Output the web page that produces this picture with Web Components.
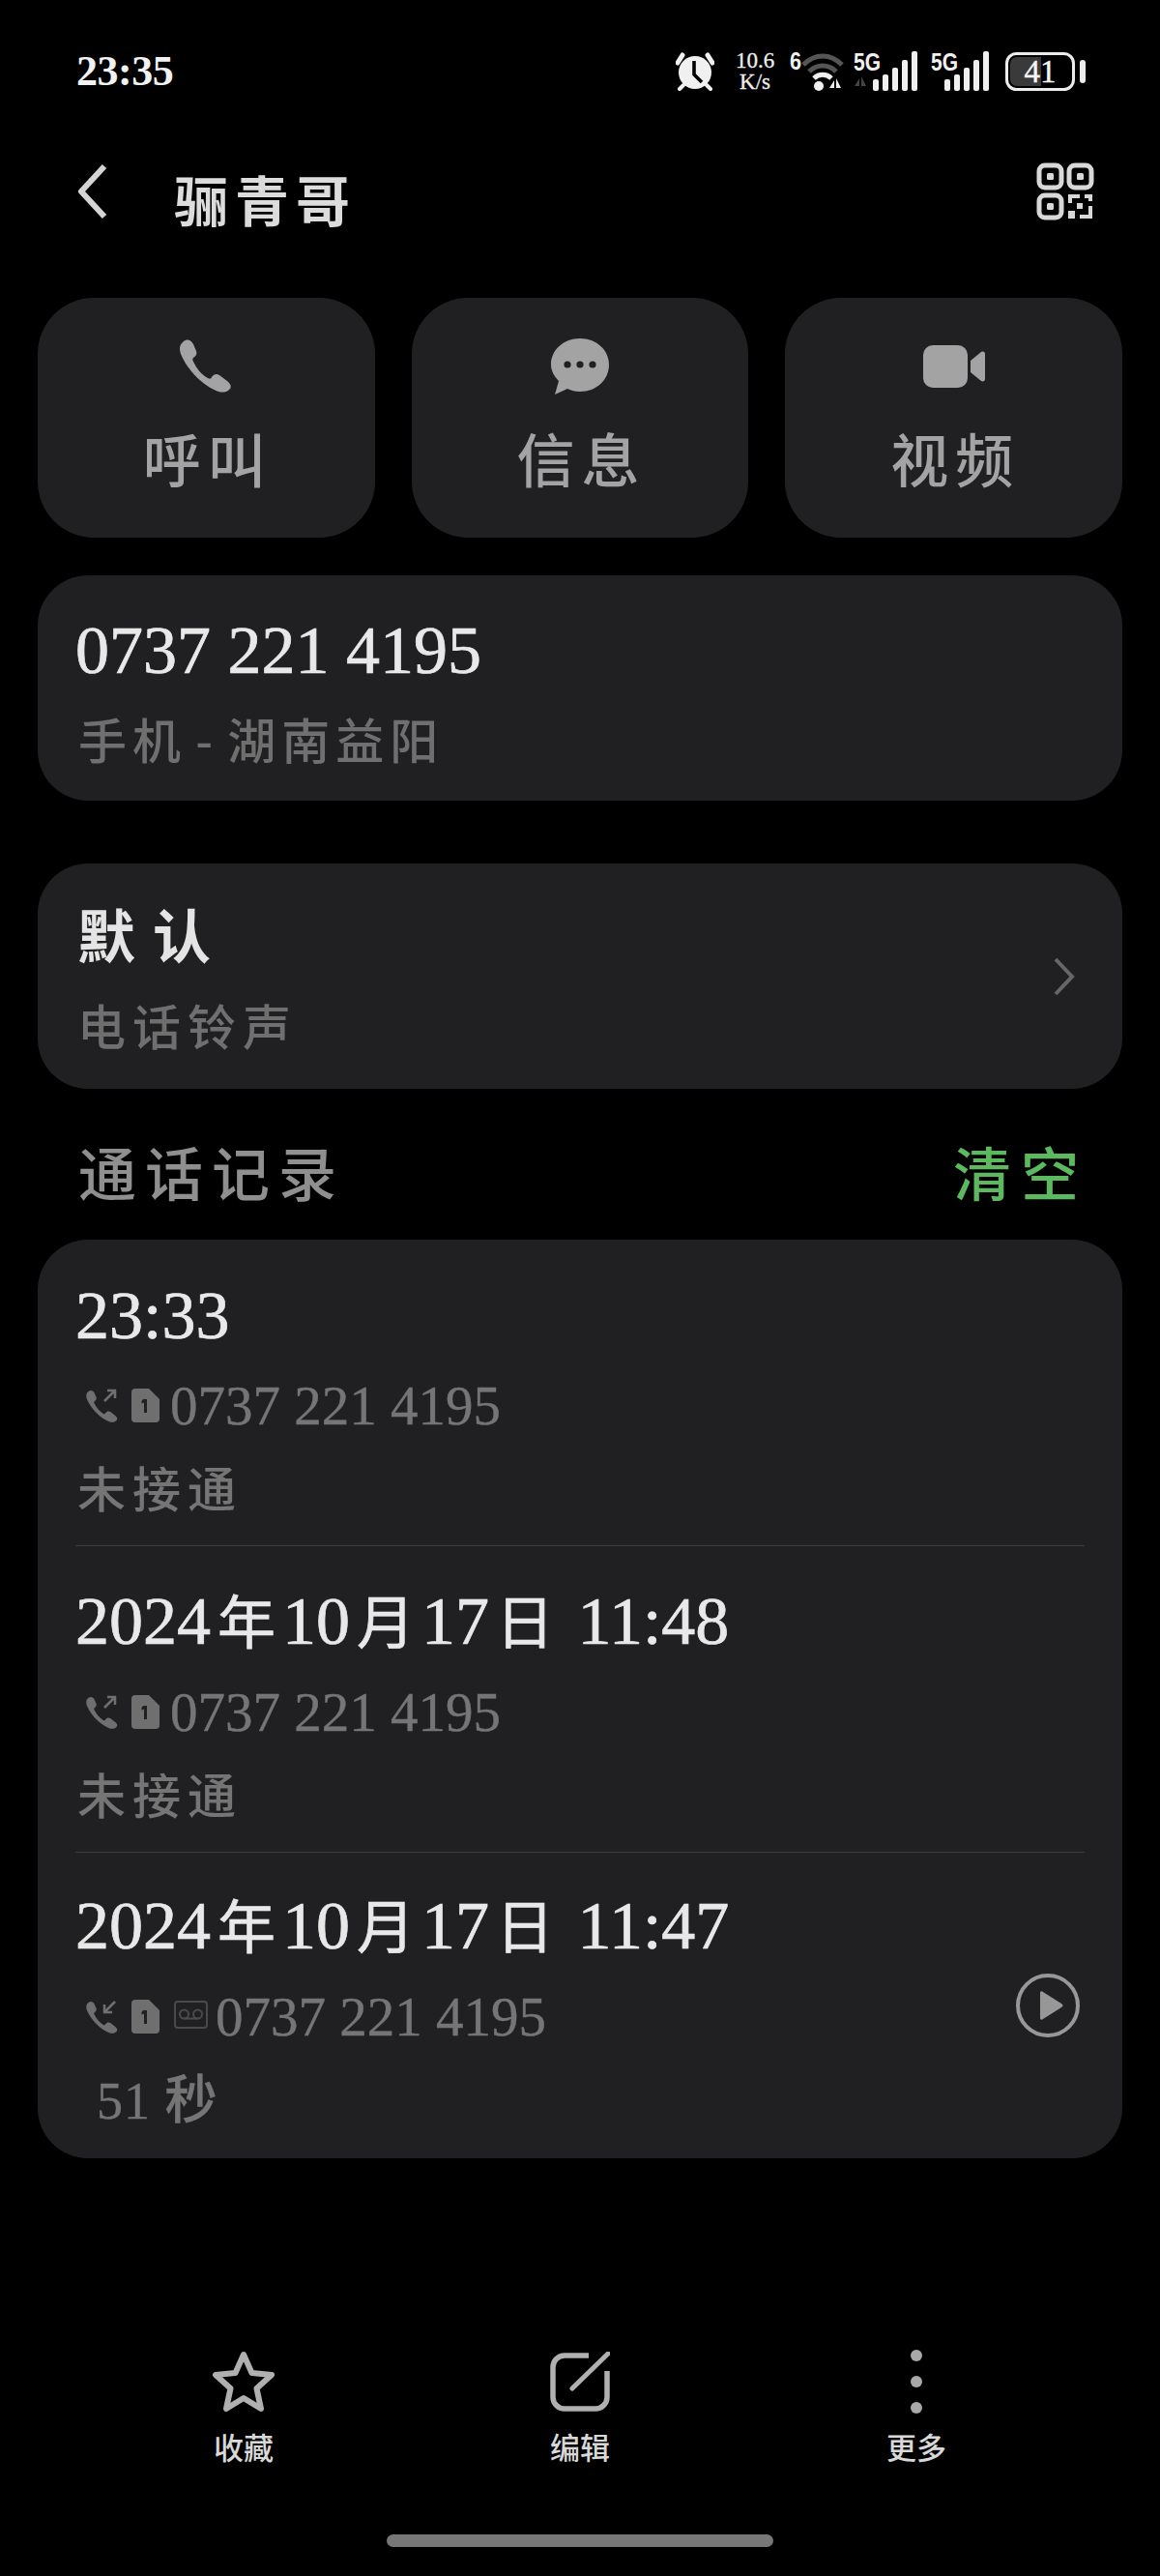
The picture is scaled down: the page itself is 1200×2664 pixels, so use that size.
<!DOCTYPE html>
<html>
<head>
<meta charset="utf-8">
<style>
    html, body { margin: 0; padding: 0; background: #000; }
    body {
        width: 1200px;
        height: 2664px;
        overflow: hidden;
        font-family: "Liberation Serif", "Noto Sans CJK SC", serif;
        color: #e6e6e6;
        display: flex;
        flex-direction: column;
    }
    .actions { display: grid; grid-template-columns: repeat(3, 1fr); gap: 38px; padding: 0 39px; }
    .main-num { font-size: 70px; line-height: 82px; color: #e8e8e8; -webkit-text-stroke: .7px #e8e8e8; }
    .cjk { font-family: "Noto Sans CJK SC", sans-serif; font-size: 60px; margin: 0 7px; }
    .spacer { flex: 1; }
</style>
</head>
<body>
<template id="t-status">
    <style>
        :host { display: flex; justify-content: space-between; align-items: center; height: 42px; padding: 53px 77px 0 79px; }
        .time { font: bold 44px/42px "Liberation Serif", serif; color: #f2f2f2; letter-spacing: -.5px; }
        .right { display: flex; align-items: center; }
        svg { display: block; flex: none; }
        .speed { font: 23px/22px "Liberation Serif", serif; color: #eee; text-align: center; width: 46px; margin: 0 13px 0 19px; -webkit-text-stroke: .3px #eee; }
        .batt { position: relative; width: 72px; height: 40px; margin-left: 15px; box-sizing: border-box; }
        .batt b { position: absolute; inset: 0; text-align: center; font: 33px/41px "Liberation Serif", serif; color: #f5f5f5; -webkit-text-stroke: .4px #f5f5f5; }
        .sig { margin-top: -6px; }
    </style>
    <div class="time">23:35</div>
    <div class="right">
        <svg width="40" height="40" viewBox="0 0 40 40">
            <path d="M2 11 7 3M38 11 33 3" stroke="#f0f0f0" stroke-width="5" stroke-linecap="round"/>
            <path d="M8 34 4 38M32 34 36 38" stroke="#f0f0f0" stroke-width="4" stroke-linecap="round"/>
            <circle cx="20" cy="21" r="17" fill="#f0f0f0"/>
            <path d="M19 9V23L27 31" fill="none" stroke="#000" stroke-width="3.6"/>
        </svg>
        <div class="speed">10.6<br>K/s</div>
        <svg class="sig" width="56" height="48" viewBox="0 -6 56 48">
            <text x="0" y="19" font-family="Liberation Sans" font-weight="700" font-size="25" fill="#f0f0f0" textLength="12" lengthAdjust="spacingAndGlyphs">6</text>
            <path d="M14 14C26 2 42 2 54 14" fill="none" stroke="#555" stroke-width="5"/>
            <path d="M20 21C28 13 40 13 48 21" fill="none" stroke="#555" stroke-width="5"/>
            <path d="M25 28C30 23 38 23 43 28" fill="none" stroke="#f0f0f0" stroke-width="5"/>
            <circle cx="30" cy="36" r="5" fill="#f0f0f0"/>
            <path d="M41 38 46 30V38ZM48 28V38H53Z" fill="#f0f0f0"/>
        </svg>
        <svg class="sig" width="69" height="48" viewBox="0 -6 69 48" style="margin-left:10px">
            <text x="0" y="20" font-family="Liberation Sans" font-weight="700" font-size="26" fill="#f0f0f0" textLength="28" lengthAdjust="spacingAndGlyphs">5G</text>
            <path d="M1 36 6 28V36ZM8 26V36H13Z" fill="#444"/>
            <rect x="20" y="29" width="6" height="12" rx="2" fill="#f0f0f0"/>
            <rect x="30" y="24" width="6" height="17" rx="2" fill="#f0f0f0"/>
            <rect x="40" y="17" width="6" height="24" rx="2" fill="#f0f0f0"/>
            <rect x="50" y="9" width="6" height="32" rx="2" fill="#f0f0f0"/>
            <rect x="60" y="0" width="6" height="41" rx="2" fill="#f0f0f0"/>
        </svg>
        <svg class="sig" width="62" height="48" viewBox="0 -6 62 48" style="margin-left:11px">
            <text x="0" y="20" font-family="Liberation Sans" font-weight="700" font-size="26" fill="#f0f0f0" textLength="28" lengthAdjust="spacingAndGlyphs">5G</text>
            <rect x="14" y="29" width="6" height="12" rx="2" fill="#f0f0f0"/>
            <rect x="24" y="24" width="6" height="17" rx="2" fill="#f0f0f0"/>
            <rect x="34" y="17" width="6" height="24" rx="2" fill="#f0f0f0"/>
            <rect x="44" y="9" width="6" height="32" rx="2" fill="#f0f0f0"/>
            <rect x="54" y="0" width="6" height="41" rx="2" fill="#f0f0f0"/>
        </svg>
        <div class="batt">
            <svg width="72" height="40" viewBox="0 0 72 40">
                <path d="M12 5H37V35H12A7 7 0 0 1 5 28V12A7 7 0 0 1 12 5Z" fill="#3a3a3a"/>
                <rect x="1.5" y="1.5" width="69" height="37" rx="10" fill="none" stroke="#ececec" stroke-width="3"/>
            </svg>
            <b>41</b>
        </div>
        <svg width="6" height="24" viewBox="0 0 6 24" style="margin-left:5px"><rect width="6" height="24" rx="3" fill="#ececec"/></svg>
    </div>
</template>

<template id="t-header">
    <style>
        :host { display: flex; align-items: center; height: 100px; margin: 53px 0 60px; padding: 0 68px 0 80px; }
        svg { display: block; flex: none; }
        .title { flex: 1; margin-left: 68px; font: 700 56px/100px "Noto Sans CJK SC", sans-serif; letter-spacing: 7px; color: #dcdcdc; padding-top: 14px; }
    </style>
    <svg width="32" height="60" viewBox="0 0 32 60"><path d="M28 4 4 30 28 56" fill="none" stroke="#d4d4d4" stroke-width="6" stroke-linejoin="round"/></svg>
    <div class="title"><slot></slot></div>
    <svg width="60" height="60" viewBox="0 0 60 60">
        <g fill="none" stroke="#d8d8d8" stroke-width="5">
            <rect x="3" y="3" width="23" height="23" rx="6"/>
            <rect x="34" y="3" width="23" height="23" rx="6"/>
            <rect x="3" y="34" width="23" height="23" rx="6"/>
        </g>
        <g fill="#d8d8d8">
            <rect x="11" y="11" width="7" height="7" rx="1.5"/>
            <rect x="42" y="11" width="7" height="7" rx="1.5"/>
            <rect x="11" y="42" width="7" height="7" rx="1.5"/>
            <path d="M33 33H45V37H37V42H33ZM50 33H58V40H54V37H50ZM42 42H48V48H42ZM33 50H40V58H33ZM54 45H58V58H45V54H54Z"/>
        </g>
    </svg>
</template>

<template id="t-action">
    <style>
        :host { display: flex; flex-direction: column; align-items: center; height: 248px; background: #202022; border-radius: 58px; color: #a3a3a3; }
        .ico { height: 134px; padding-top: 42px; box-sizing: border-box; display: flex; align-items: flex-start; justify-content: center; }
        .lab { font: 500 60px/66px "Noto Sans CJK SC", sans-serif; letter-spacing: 7px; margin-right: -3px; margin-top: -2px; }
    </style>
    <div class="ico"><slot name="icon"></slot></div>
    <div class="lab"><slot></slot></div>
</template>

<template id="t-card">
    <style>
        :host { display: flex; align-items: center; margin: 0 39px; background: #202022; border-radius: 52px; box-sizing: border-box; }
        .txt { flex: 1; min-width: 0; }
    </style>
    <div class="txt"><slot></slot></div>
    <slot name="end"></slot>
</template>

<template id="t-section">
    <style>
        :host { display: flex; justify-content: space-between; align-items: center; height: 62px; padding: 0 84px 0 81px; margin: 54px 0 40px; font: 500 60px/62px "Noto Sans CJK SC", sans-serif; letter-spacing: 9px; color: #8f8f8f; }
        .g { color: #5cb95f; letter-spacing: 10px; margin-right: -10px; }
    </style>
    <div><slot></slot></div>
    <div class="g"><slot name="action"></slot></div>
</template>

<template id="t-call">
    <style>
        :host { display: flex; align-items: center; height: 316px; box-sizing: border-box; padding: 8px 3px 0 39px; }
        .col { flex: 1; min-width: 0; }
        .top { font: 70px/80px "Liberation Serif", "Noto Sans CJK SC", serif; color: #e8e8e8; -webkit-text-stroke: .7px #e8e8e8; white-space: pre; height: 80px; margin-bottom: 22px; }
        .sub { display: flex; align-items: center; height: 70px; font: 57px/70px "Liberation Serif", serif; color: #757575; -webkit-text-stroke: .4px #757575; padding-left: 10px; }
        .sub ::slotted(svg) { display: block; flex: none; }
        .third { font: 500 50px/70px "Noto Sans CJK SC", sans-serif; color: #757575; letter-spacing: 7px; padding-left: 2px; margin-top: 13px; }
    </style>
    <div class="col">
        <div class="top"><slot name="title"></slot></div>
        <div class="sub"><slot name="icons"></slot><slot name="num"></slot></div>
        <div class="third"><slot name="note"></slot></div>
    </div>
    <slot name="end"></slot>
</template>

<template id="t-nav">
    <style>
        :host { display: flex; flex-direction: column; align-items: center; font: 500 31px/40px "Noto Sans CJK SC", sans-serif; color: #d8d8d8; }
        .ico { height: 70px; display: flex; align-items: center; justify-content: center; }
        .lab { margin-top: 12px; }
    </style>
    <div class="ico"><slot name="icon"></slot></div>
    <div class="lab"><slot></slot></div>
</template>

<template id="t-home">
    <style>
        :host { display: block; width: 400px; height: 13px; border-radius: 7px; background: #777; margin: 0 auto 30px; }
    </style>
</template>

<script>
    // every element here only clones its template into an open shadow root
    function makeElement(tag, tplId) {
        const tpl = document.getElementById(tplId);
        customElements.define(tag, class extends HTMLElement {
            constructor() {
                super();
                this.attachShadow({ mode: 'open' }).appendChild(tpl.content.cloneNode(true));
            }
        });
    }
    makeElement('status-bar', 't-status');
    makeElement('top-header', 't-header');
    makeElement('action-tile', 't-action');
    makeElement('info-card', 't-card');
    makeElement('section-head', 't-section');
    makeElement('call-row', 't-call');
    makeElement('nav-item', 't-nav');
    makeElement('home-bar', 't-home');
</script>

<svg width="0" height="0" style="position:absolute">
    <defs>
        <symbol id="hs" viewBox="0 0 56 56"><path fill="currentColor" d="M6 3C10 0 14 2 16 6L19 13C20 16 19 18 16 20C15 21 15 22 16 24C20 32 24 37 31 41C33 42 34 42 35 40C37 37 40 36 43 38L51 44C55 47 56 51 53 53C50 56 46 56 42 55C26 49 10 33 3 16C1 10 2 6 6 3Z"/></symbol>
        <symbol id="sim" viewBox="0 0 29 35"><path fill="#6f6f6f" d="M4 0H18L29 11V31A4 4 0 0 1 25 35H4A4 4 0 0 1 0 31V4A4 4 0 0 1 4 0Z"/><path fill="#202022" d="M12 11H16V25H13V14.500L10.500 15.500V13Z"/></symbol>
    </defs>
</svg>

<status-bar></status-bar>
<top-header>骊青哥</top-header>

<div class="actions">
    <action-tile>
        <svg slot="icon" width="56" height="56" style="margin-left:-2px"><use href="#hs"/></svg>
        呼叫
    </action-tile>
    <action-tile>
        <svg slot="icon" width="60" height="58" viewBox="0 0 60 58"><path fill="currentColor" d="M30 0C47 0 60 12 60 27C60 43 47 55 30 55C25 55 21 54 17 52L4 58L8 44C3 39 0 33 0 27C0 12 13 0 30 0Z"/><g fill="#202022"><circle cx="17" cy="27" r="3.600"/><circle cx="30" cy="27" r="3.600"/><circle cx="43" cy="27" r="3.600"/></g></svg>
        信息
    </action-tile>
    <action-tile>
        <svg slot="icon" width="64" height="46" viewBox="0 0 64 46" style="margin-top:6px"><rect width="46" height="44" y="1" rx="10" fill="currentColor"/><path d="M49 17 60 8C62 7 64 8 64 10V36C64 38 62 39 60 38L49 29Z" fill="currentColor"/></svg>
        视频
    </action-tile>
</div>

<info-card style="margin-top:39px;height:233px;padding-left:39px">
    <div class="main-num" style="margin-top:1px">0737 221 4195</div>
    <div style="font:500 50px/60px 'Noto Sans CJK SC',sans-serif;letter-spacing:6px;word-spacing:-8px;color:#6f6f6f;padding:19px 0 0 3px">手机 - 湖南益阳</div>
</info-card>

<info-card style="margin-top:65px;height:233px;padding:0 49px 0 41px">
    <div style="font:700 60px/70px 'Noto Sans CJK SC',sans-serif;letter-spacing:18px;color:#e4e4e4">默认</div>
    <div style="font:500 50px/60px 'Noto Sans CJK SC',sans-serif;letter-spacing:7px;color:#6f6f6f;margin-top:29px">电话铃声</div>
    <svg slot="end" width="22" height="40" viewBox="0 0 22 40"><path d="M2 2 19 20 2 38" fill="none" stroke="#666" stroke-width="4"/></svg>
</info-card>

<section-head>通话记录<span slot="action">清空</span></section-head>

<info-card style="display:block;padding:0">
    <call-row>
        <span slot="title" style="display:block;padding-top:4px">23:33</span>
        <svg slot="icons" width="88" height="35" viewBox="0 0 88 35">
            <use href="#hs" width="34" height="34" y="1" color="#6f6f6f"/>
            <path d="M20 13 31 2M23 2H31V10" stroke="#6f6f6f" stroke-width="2.500" fill="none"/>
            <use href="#sim" x="48" width="29" height="35"/>
        </svg>
        <span slot="num">0737 221 4195</span>
        <span slot="note">未接通</span>
    </call-row>
    <div style="height:1px;background:#3c3c3e;margin:0 39px"></div>
    <call-row>
        <span slot="title">2024<span class="cjk">年</span>10<span class="cjk">月</span>17<span class="cjk">日</span> 11:48</span>
        <svg slot="icons" width="88" height="35" viewBox="0 0 88 35">
            <use href="#hs" width="34" height="34" y="1" color="#6f6f6f"/>
            <path d="M20 13 31 2M23 2H31V10" stroke="#6f6f6f" stroke-width="2.500" fill="none"/>
            <use href="#sim" x="48" width="29" height="35"/>
        </svg>
        <span slot="num">0737 221 4195</span>
        <span slot="note">未接通</span>
    </call-row>
    <div style="height:1px;background:#3c3c3e;margin:0 39px"></div>
    <call-row>
        <span slot="title">2024<span class="cjk">年</span>10<span class="cjk">月</span>17<span class="cjk">日</span> 11:47</span>
        <svg slot="icons" width="135" height="35" viewBox="0 0 135 35">
            <use href="#hs" width="34" height="34" y="1" color="#6f6f6f"/>
            <path d="M31 2 20 13M20 5V13H28" stroke="#6f6f6f" stroke-width="2.500" fill="none"/>
            <use href="#sim" x="48" width="29" height="35"/>
            <rect x="93" y="2" width="33" height="27" rx="3" fill="none" stroke="#4a4a4c" stroke-width="2"/>
            <circle cx="102.500" cy="15" r="4.500" fill="none" stroke="#4a4a4c" stroke-width="2"/>
            <circle cx="116.500" cy="15" r="4.500" fill="none" stroke="#4a4a4c" stroke-width="2"/>
            <path d="M102 19.500H117" stroke="#4a4a4c" stroke-width="2"/>
        </svg>
        <span slot="num">0737 221 4195</span>
        <span slot="note" style="font-family:'Liberation Serif','Noto Sans CJK SC',serif;font-size:54px;letter-spacing:1px;padding-left:20px;-webkit-text-stroke:.4px #757575">51 秒</span>
        <svg slot="end" width="66" height="66" viewBox="0 0 66 66" style="margin:-8px 41px 0 0;flex:none">
            <circle cx="33" cy="33" r="31" fill="none" stroke="#979797" stroke-width="4"/>
            <path d="M25 20C25 18 27 18 28 19L47 31C49 32 49 34 47 35L28 47C27 48 25 48 25 46Z" fill="#979797"/>
        </svg>
    </call-row>
</info-card>

<div class="spacer"></div>

<div style="display:grid;grid-template-columns:repeat(3,348px);padding:0 78px;margin-bottom:71px">
    <nav-item>
        <svg slot="icon" width="68" height="66" viewBox="0 0 68 66"><path d="M34 5 42.500 24 63 26 47.500 40 52 61 34 50 16 61 20.500 40 5 26 25.500 24Z" fill="none" stroke="#b0b0b0" stroke-width="6" stroke-linejoin="round"/></svg>
        收藏
    </nav-item>
    <nav-item>
        <svg slot="icon" width="62" height="62" viewBox="0 0 62 62"><path d="M40 4H15A12 12 0 0 0 3 16V47A12 12 0 0 0 15 59H47A12 12 0 0 0 59 47V20" fill="none" stroke="#b0b0b0" stroke-width="5.500"/><path d="M60 2 23 38" stroke="#b0b0b0" stroke-width="5" stroke-linecap="round"/></svg>
        编辑
    </nav-item>
    <nav-item>
        <svg slot="icon" width="14" height="66" viewBox="0 0 14 66"><g fill="#a8a8a8"><circle cx="7" cy="6" r="6"/><circle cx="7" cy="33" r="6"/><circle cx="7" cy="60" r="6"/></g></svg>
        更多
    </nav-item>
</div>

<home-bar></home-bar>
</body>
</html>
